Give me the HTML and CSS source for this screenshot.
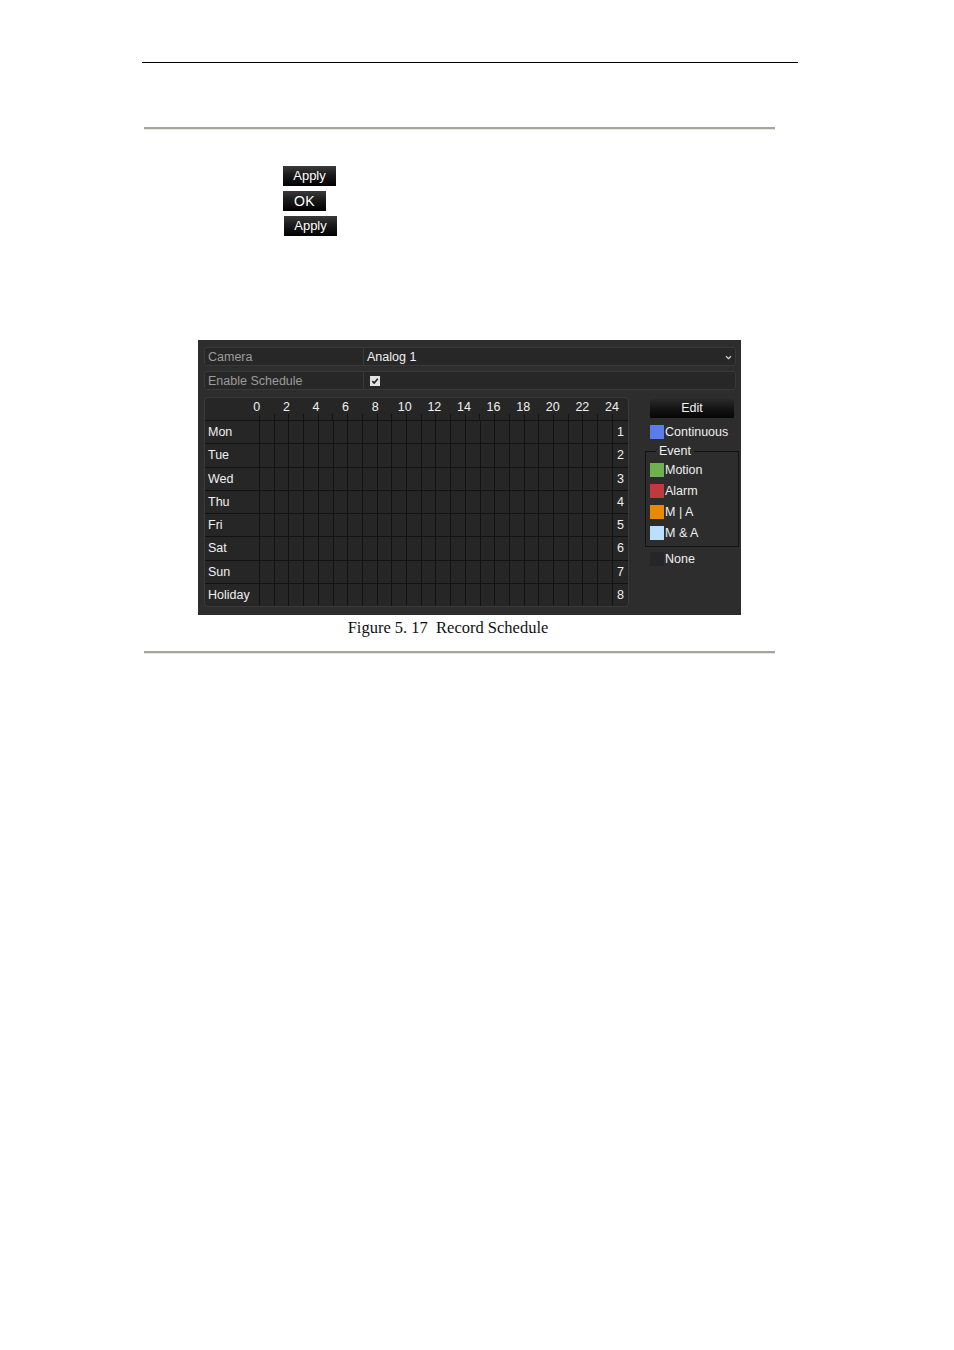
FILE: index.html
```html
<!DOCTYPE html>
<html>
<head>
<meta charset="utf-8">
<link rel="stylesheet" href="styles.css">
</head>
<body>
<div class="page">
  <div class="top-rule"></div>
  <div class="gray-rule first"></div>

  <div class="btns">
    <div class="btn">Apply</div>
    <div class="btn ok">OK</div>
    <div class="btn shift">Apply</div>
  </div>

  <div class="panel">
    <div class="field">
      <div class="f-label">Camera</div>
      <div class="f-value">Analog 1
        <svg class="chev" width="7" height="5" viewBox="0 0 7 5"><path d="M1 1.2 L3.5 3.6 L6 1.2" fill="none" stroke="#d8d8d8" stroke-width="1.2"/></svg>
      </div>
    </div>
    <div class="field">
      <div class="f-label">Enable Schedule</div>
      <div class="f-value">
        <span class="chk"><svg width="10" height="10" viewBox="0 0 10 10"><path d="M2.3 5.2 L4.2 7 L7.8 2.8" fill="none" stroke="#222" stroke-width="1.6"/></svg></span>
      </div>
    </div>

    <div class="lower">
      <div class="grid">
        <div class="g-head">
          <div class="hours">
            <span>0</span><span>2</span><span>4</span><span>6</span><span>8</span><span>10</span><span>12</span><span>14</span><span>16</span><span>18</span><span>20</span><span>22</span><span>24</span>
          </div>
          <div class="ticks"></div>
        </div>
        <div class="g-row"><div class="day">Mon</div><div class="cells"></div><div class="num">1</div></div>
        <div class="g-row"><div class="day">Tue</div><div class="cells"></div><div class="num">2</div></div>
        <div class="g-row"><div class="day">Wed</div><div class="cells"></div><div class="num">3</div></div>
        <div class="g-row"><div class="day">Thu</div><div class="cells"></div><div class="num">4</div></div>
        <div class="g-row"><div class="day">Fri</div><div class="cells"></div><div class="num">5</div></div>
        <div class="g-row"><div class="day">Sat</div><div class="cells"></div><div class="num">6</div></div>
        <div class="g-row"><div class="day">Sun</div><div class="cells"></div><div class="num">7</div></div>
        <div class="g-row last"><div class="day">Holiday</div><div class="cells"></div><div class="num">8</div></div>
      </div>

      <div class="side">
        <div class="edit">Edit</div>
        <div class="legend-item cont"><span class="sw blue"></span>Continuous</div>
        <div class="event">
          <div class="ev-title">Event</div>
          <div class="legend-item"><span class="sw green"></span>Motion</div>
          <div class="legend-item"><span class="sw red"></span>Alarm</div>
          <div class="legend-item"><span class="sw orange"></span>M | A</div>
          <div class="legend-item"><span class="sw sky"></span>M &amp; A</div>
        </div>
        <div class="legend-item none"><span class="sw dark"></span>None</div>
      </div>
    </div>
  </div>

  <div class="caption">Figure 5. 17&nbsp; Record Schedule</div>
  <div class="gray-rule bottom"></div>
</div>
</body>
</html>
```

FILE: styles.css
```css
html, body {
  margin: 0;
  padding: 0;
  background: #ffffff;
}

.page {
  width: 954px;
  min-height: 1350px;
  font-family: "Liberation Sans", Arial, sans-serif;
}

.top-rule {
  margin: 62px 0 0 142px;
  width: 656px;
  height: 1px;
  background: #000;
}

.gray-rule {
  margin-left: 144px;
  width: 631px;
  height: 2px;
  background: #a7a59d;
  border-bottom: 1px solid #e9e7dd;
}
.gray-rule.first { margin-top: 64px; }
.gray-rule.bottom { margin-top: 14px; }

.btns {
  margin: 36px 0 0 283px;
  display: flex;
  flex-direction: column;
  align-items: flex-start;
  gap: 5px;
}
.btn {
  width: 53px;
  height: 20px;
  box-sizing: border-box;
  background: linear-gradient(#3a3a3a 0%, #1a1a1a 45%, #000 100%);
  color: #fff;
  font-size: 13px;
  line-height: 20px;
  text-align: center;
}
.btn.ok {
  width: 43px;
  font-size: 14px;
  letter-spacing: 0.5px;
}
.btn.shift { margin-left: 1px; }

.panel {
  margin: 104px 0 0 198px;
  width: 543px;
  height: 275px;
  box-sizing: border-box;
  background: #2d2d2d;
  padding: 7px 2px 0 6px;
  font-size: 12.5px;
  color: #f0f0f0;
  display: flex;
  flex-direction: column;
  gap: 5px;
}

.field {
  width: 532px;
  height: 19px;
  box-sizing: border-box;
  display: flex;
  background: #272727;
  border: 1px solid #3a3a3a;
  border-radius: 3px;
}
.f-label {
  width: 159px;
  box-sizing: border-box;
  border-right: 1px solid #3a3a3a;
  color: #9b9b9b;
  padding: 1px 0 0 3px;
  line-height: 17px;
}
.f-value {
  flex: 1;
  display: flex;
  align-items: center;
  padding: 1px 0 0 3px;
  color: #f2f2f2;
  line-height: 16px;
}
.chev { margin-left: auto; margin-right: 3px; }
.chk {
  width: 10px;
  height: 10px;
  background: #e2e2e2;
  display: inline-flex;
  margin-left: 3px;
}

.lower {
  display: flex;
  gap: 16px;
  margin-top: 2px;
}

.grid {
  width: 425px;
  height: 210px;
  box-sizing: border-box;
  background: #262626;
  border: 1px solid #3a3a3a;
  border-radius: 4px;
  overflow: hidden;
  display: flex;
  flex-direction: column;
}

.g-head {
  height: 22px;
  flex: none;
  display: flex;
  flex-direction: column;
  border-bottom: 1px solid #121212;
}
.hours {
  display: flex;
  padding-left: 37px;
  height: 16px;
  align-items: flex-end;
  font-size: 12.5px;
}
.hours span {
  width: 29.6px;
  flex: none;
  text-align: center;
  line-height: 14px;
}
.ticks {
  margin-left: 54px;
  width: 354px;
  flex: 1;
  background: repeating-linear-gradient(to right, #121212 0 1px, transparent 1px 14.7px);
}

.g-row {
  flex: 1 1 0;
  box-sizing: border-box;
  display: flex;
  align-items: stretch;
  border-bottom: 1px solid #121212;
}
.g-row.last { border-bottom: none; }
.day {
  width: 54px;
  padding-left: 3px;
  box-sizing: border-box;
  display: flex;
  align-items: center;
}
.cells {
  width: 353px;
  background: repeating-linear-gradient(to right, #121212 0 1px, transparent 1px 14.7px);
  border-right: 1px solid #121212;
}
.num {
  flex: 1;
  display: flex;
  align-items: center;
  justify-content: flex-end;
  padding-right: 4px;
}

.side {
  width: 94px;
  display: flex;
  flex-direction: column;
}
.edit {
  margin-left: 5px;
  width: 84px;
  height: 21px;
  background: linear-gradient(#2f2f2f 0%, #161616 50%, #050505 100%);
  border-radius: 1px;
  text-align: center;
  line-height: 22px;
  color: #f4f4f4;
}

.legend-item {
  display: flex;
  align-items: center;
  height: 14px;
  line-height: 14px;
  margin-left: 5px;
}
.legend-item.cont { margin-top: 7px; }
.sw {
  width: 14px;
  height: 14px;
  flex: none;
  margin-right: 1px;
}
.sw.blue { background: #5b7de9; }
.sw.green { background: #6db24f; }
.sw.red { background: #c0393f; }
.sw.orange { background: #e88a00; }
.sw.sky { background: #b9e1ff; }
.sw.dark { background: #262626; }

.event {
  margin-top: 12px;
  height: 96px;
  box-sizing: border-box;
  border: 1px solid #121212;
  position: relative;
  display: flex;
  flex-direction: column;
  gap: 7px;
  padding-top: 11px;
}
.event .legend-item { margin-left: 4px; }
.ev-title {
  position: absolute;
  top: -8px;
  left: 10px;
  padding: 0 3px;
  background: #2d2d2d;
  line-height: 14px;
}
.legend-item.none { margin-top: 5px; }

.caption {
  margin: 3px 0 0 148px;
  width: 600px;
  text-align: center;
  font-family: "Liberation Serif", "Times New Roman", serif;
  font-size: 16.5px;
  line-height: 19px;
  color: #111;
}
```
